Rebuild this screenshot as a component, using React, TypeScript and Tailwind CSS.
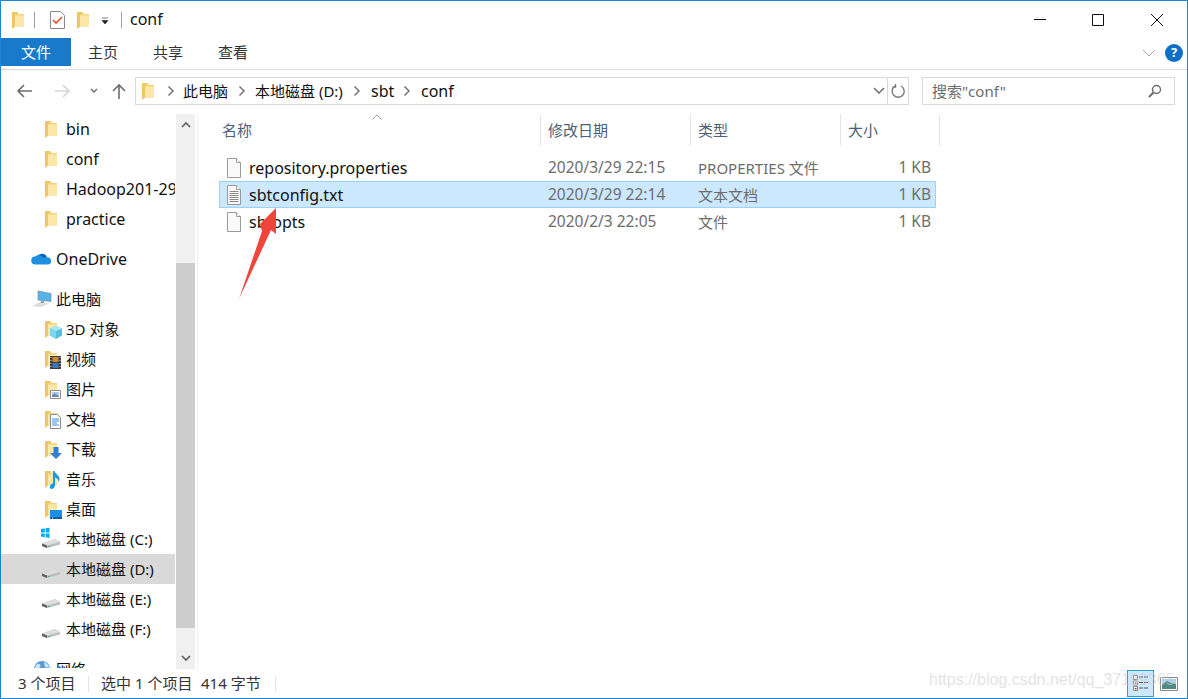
import type { ReactNode } from 'react'

const FONT = 'font-["Noto_Sans","Noto_Sans_CJK_SC",sans-serif]'

function Folder({ className = 'w-[14px] h-[18px]' }: { className?: string }) {
    return (
        <svg viewBox="0 0 14 18" className={className}>
            <path d="M1 1h5l1.5 2H13v12.5L2.5 15.5 2 17.5 1 17z" fill="#f5d67f" />
            <path d="M4 4.5h9v11H4z" fill="#fbe7a6" />
            <path d="M1 1h5l1.5 2H4v12.5l-2 2-1-.5z" fill="#eec765" />
        </svg>
    )
}

function FileIcon({ lines = false }: { lines?: boolean }) {
    return (
        <svg viewBox="0 0 16 20" className="w-4 h-5 shrink-0">
            <path d="M1.5.5h9l4 4v15h-13z" fill="#fafafa" stroke="#9a9a9a" />
            <path d="M10.5.5v4h4" fill="#fff" stroke="#9a9a9a" />
            {lines && (
                <path d="M3.5 6.5h9M3.5 8.5h9M3.5 10.5h9M3.5 12.5h9M3.5 14.5h9M3.5 16.5h9" stroke="#8a8a8a" />
            )}
        </svg>
    )
}

function Drive({ win = false }: { win?: boolean }) {
    return (
        <svg viewBox="0 0 20 16" className="w-5 h-4 overflow-visible">
            {win && <path d="M0-3l3.800-.6V.6H0zM4.600-3.700 8.500-4.300V.6H4.600zM0 1.400h3.800v3.800L0 4.600zM4.600 1.400h3.900v4.500L4.600 5.300z" fill="#00adef" />}
            <path d="M1 11.500 14 7l5 3v2.500L6 16l-5-2z" fill="#bdbdbd" />
            <path d="M1 11.500 6 13.500 19 10 14 7z" fill="#dedede" />
            <path d="M1 11.500l5 2V16l-5-2z" fill="#5e5e5e" />
            <path d="M7 14h2v1H7z" fill="#57b86a" />
        </svg>
    )
}

function Overlay({ kind }: { kind: string }) {
    if (kind === '3d') {
        return (
            <svg viewBox="0 0 12 13" className="w-3 h-[13px]">
                <path d="M6 0l6 2.500v7L6 13 0 9.500v-7z" fill="#4fc3dc" />
                <path d="M6 0l6 2.500L6 5 0 2.500z" fill="#a8e8f2" />
                <path d="M0 2.500 6 5v8L0 9.500z" fill="#7fd8ea" />
            </svg>
        )
    }
    if (kind === 'video') {
        return (
            <svg viewBox="0 0 11 13" className="w-[11px] h-[13px]">
                <path d="M0 0h11v13H0z" fill="#3c3c3c" />
                <path d="M2.500 1h6v5h-6z" fill="#c98b3a" />
                <path d="M2.500 7h6v5h-6z" fill="#3f76c4" />
                <path d="M.5 1h1v1h-1zM.5 4h1v1h-1zM.5 7h1v1h-1zM.5 10h1v1h-1zM9.500 1h1v1h-1zM9.500 4h1v1h-1zM9.500 7h1v1h-1zM9.500 10h1v1h-1z" fill="#ddd" />
            </svg>
        )
    }
    if (kind === 'pic') {
        return (
            <svg viewBox="0 0 11 9" className="w-[11px] h-[9px]">
                <path d="M.5.500h10v8H.500z" fill="#fff" stroke="#8c8c8c" />
                <path d="M2 2h7v3H2z" fill="#a9c8ea" />
                <path d="M2 7V5l3-1.500L9 6v1z" fill="#6b8aa8" />
            </svg>
        )
    }
    if (kind === 'doc') {
        return (
            <svg viewBox="0 0 11 15" className="w-[11px] h-[15px]">
                <path d="M.5.500h7l3 3v11H.500z" fill="#fff" stroke="#8c8c8c" />
                <path d="M2 5h7M2 7h7M2 9h5M2 11h7" stroke="#3a8fd8" />
            </svg>
        )
    }
    if (kind === 'down') {
        return (
            <svg viewBox="0 0 12 12" className="w-3 h-3">
                <path d="M3.500 0h5v6H12l-6 6-6-6h3.500z" fill="#2f7fd0" />
            </svg>
        )
    }
    if (kind === 'music') {
        return (
            <svg viewBox="0 0 10 18" className="w-[10px] h-[18px]">
                <path d="M3 0h1.500c.5 3 5 4 5 8 0 1.500-.5 2.500-1 3 0-2.500-2-4-3.500-4.500V14c0 2.500-2 4-3.500 4S0 17 0 15.500 1.500 12.500 3 12.500z" fill="#0f9be8" />
            </svg>
        )
    }
    return (
        <svg viewBox="0 0 12 9" className="w-3 h-[9px]">
            <path d="M0 0h12v8H0z" fill="#1b8fe3" />
            <path d="M0 7h12v2H0z" fill="#0a5fa8" />
            <path d="M2 7.500h1v1H2z" fill="#fff" />
        </svg>
    )
}

function SideRow({ icon, label, pad = 'pl-[65px]', size = 'text-[15px]', selected = false }: { icon: ReactNode; label: string; pad?: string; size?: string; selected?: boolean }) {
    return (
        <div className={`relative h-[30px] flex items-center whitespace-nowrap overflow-hidden text-[#111] ${size} ${pad} ${selected ? 'bg-[#d9d9d9]' : ''}`}>
            {icon}
            <span>{label}</span>
        </div>
    )
}

function FolderSlot({ overlay }: { overlay?: string }) {
    return (
        <span className="absolute left-[43px] top-[6px] w-[20px] h-[20px]">
            <Folder />
            {overlay && (
                <span className="absolute left-[6px] bottom-[1px] flex items-end">
                    <Overlay kind={overlay} />
                </span>
            )}
        </span>
    )
}

function DriveSlot({ win }: { win?: boolean }) {
    return (
        <span className="absolute left-[40px] top-[8px]">
            <Drive win={win} />
        </span>
    )
}

const crumbs = [
    { label: '此电脑', cls: 'ml-[8px] w-[55px] text-[15px]' },
    { label: '本地磁盘 (D:)', cls: 'ml-[9px] w-[98px] text-[15px]' },
    { label: 'sbt', cls: 'ml-[10px] w-[32px] text-[16px]' },
    { label: 'conf', cls: 'ml-[10px] w-auto text-[16px]' },
]

const files = [
    { name: 'repository.properties', date: '2020/3/29 22:15', type: 'PROPERTIES 文件', lines: false },
    { name: 'sbtconfig.txt', date: '2020/3/29 22:14', type: '文本文档', lines: true, selected: true },
    { name: 'sbtopts', date: '2020/2/3 22:05', type: '文件', lines: false },
]

function Chevron() {
    return (
        <svg viewBox="0 0 8 12" className="w-2 h-3 shrink-0">
            <path d="M1.500 1.500 6 6l-4.500 4.500" fill="none" stroke="#6a6a6a" strokeWidth="1.400" />
        </svg>
    )
}

export default function App() {
    return (
        <div className={`relative w-[1188px] h-[699px] overflow-hidden bg-white border border-[#1a86d9] flex flex-col ${FONT}`}>
            {/* title bar */}
            <div className="h-[37px] shrink-0 flex items-center pl-[10px] text-[16px] text-[#111]">
                <Folder />
                <div className="w-px h-4 bg-[#a0a0a0] ml-[9px] mr-[15px]" />
                <svg viewBox="0 0 15 18" className="w-[15px] h-[18px]">
                    <path d="M.5.500h10l4 4v13H.500z" fill="#fff" stroke="#8a8a8a" />
                    <path d="M3 9l3 3 6-6" fill="none" stroke="#e2562b" strokeWidth="1.600" />
                </svg>
                <Folder className="w-[14px] h-[18px] ml-[11px]" />
                <svg viewBox="0 0 8 8" className="w-2 h-2 ml-[11px] mt-[3px]">
                    <path d="M1 1h6M1 3.500h6L4 7z" fill="#222" stroke="#222" strokeWidth=".6" />
                </svg>
                <div className="w-px h-4 bg-[#a0a0a0] ml-[12px] mr-[8px]" />
                <span className="-mt-px">conf</span>
                <div className="ml-auto flex items-center">
                    <svg viewBox="0 0 46 30" className="w-[46px] h-[30px] mr-[12px]"><path d="M17 14.500h12" stroke="#111" fill="none" /></svg>
                    <svg viewBox="0 0 46 30" className="w-[46px] h-[30px] mr-[13px]"><path d="M17.500 9.500h11v11h-11z" stroke="#111" fill="none" /></svg>
                    <svg viewBox="0 0 46 30" className="w-[46px] h-[30px] mr-[7px]"><path d="M17 9l12 12M29 9 17 21" stroke="#111" fill="none" /></svg>
                </div>
            </div>

            {/* ribbon tabs */}
            <div className="h-[32px] shrink-0 flex text-[15px] text-[#333] border-b border-[#dadbdc]">
                <div className="w-[70px] h-[28px] bg-[#1979ca] text-white flex items-center justify-center">文件</div>
                <div className="ml-[17px] w-[65px] h-[28px] flex items-center">主页</div>
                <div className="w-[65px] h-[28px] flex items-center">共享</div>
                <div className="h-[28px] flex items-center">查看</div>
                <div className="ml-auto flex items-center h-[28px] pr-[4px] pt-[1px]">
                    <svg viewBox="0 0 14 8" className="w-[14px] h-2 mr-[9px]"><path d="M1 1l6 6 6-6" fill="none" stroke="#a8a8a8" /></svg>
                    <div className="w-[18px] h-[18px] rounded-full bg-[#0f6fc6] text-white text-[13px] font-bold flex items-center justify-center">?</div>
                </div>
            </div>

            {/* address row */}
            <div className="h-[44px] pb-[2px] shrink-0 flex items-center text-[15px] text-[#111]">
                <svg viewBox="0 0 16 14" className="w-4 h-[14px] ml-[15px]"><path d="M8 1 2 7l6 6M2 7h14" fill="none" stroke="#6d6d6d" strokeWidth="1.600" /></svg>
                <svg viewBox="0 0 16 14" className="w-4 h-[14px] ml-[23px]"><path d="M8 1l6 6-6 6M14 7H0" fill="none" stroke="#d6d6d6" strokeWidth="1.600" /></svg>
                <svg viewBox="0 0 8 6" className="w-2 h-[6px] ml-[19px]"><path d="M1 1l3 3 3-3" fill="none" stroke="#6d6d6d" strokeWidth="1.300" /></svg>
                <svg viewBox="0 0 14 16" className="w-[14px] h-4 ml-[14px]"><path d="M1 8l6-6 6 6M7 2v14" fill="none" stroke="#6d6d6d" strokeWidth="1.600" /></svg>
                <div className="ml-[9px] w-[774px] h-[28px] border border-[#d9d9d9] flex items-center">
                    <div className="pl-[5px] mr-[12px] flex">
                        <Folder />
                    </div>
                    <div className="flex items-center">
                        {crumbs.map(c => (
                            <div key={c.label} className="flex items-center">
                                <Chevron />
                                <span className={`whitespace-nowrap ${c.cls}`}>{c.label}</span>
                            </div>
                        ))}
                    </div>
                    <svg viewBox="0 0 12 8" className="w-3 h-2 ml-auto mr-[2px]"><path d="M1 1l5 5 5-5" fill="none" stroke="#6d6d6d" strokeWidth="1.500" /></svg>
                    <div className="w-[21px] h-full border-l border-[#d9d9d9] flex items-center justify-center">
                        <svg viewBox="0 0 16 16" className="w-4 h-4"><path d="M5 3.200A6 6 0 1 0 11 3M5.500 1v3H2.500" fill="none" stroke="#7a7a7a" strokeWidth="1.400" /></svg>
                    </div>
                </div>
                <div className="ml-[13px] w-[253px] h-[28px] border border-[#d9d9d9] flex items-center pl-[9px] pr-[12px] text-[#6d6d6d]">
                    <span>搜索"conf"</span>
                    <svg viewBox="0 0 14 14" className="w-[14px] h-[14px] ml-auto"><path d="M5.500 8.500 1 13" stroke="#6d6d6d" strokeWidth="2" fill="none" /><circle cx="8.500" cy="5.500" r="4" fill="none" stroke="#6d6d6d" strokeWidth="1.500" /></svg>
                </div>
            </div>

            {/* body */}
            <div className="flex-1 min-h-0 flex">
                <div className="w-[174px] shrink-0 overflow-hidden h-[554px]">
                    <SideRow icon={<FolderSlot />} label="bin" size="text-[16px]" />
                    <SideRow icon={<FolderSlot />} label="conf" size="text-[16px]" />
                    <SideRow icon={<FolderSlot />} label="Hadoop201-29" size="text-[16px]" />
                    <SideRow icon={<FolderSlot />} label="practice" size="text-[16px]" />
                    <div className="h-[10px]" />
                    <SideRow
                        pad="pl-[55px]"
                        size="text-[16px]"
                        label="OneDrive"
                        icon={
                            <span className="absolute left-[30px] top-[7px]">
                                <svg viewBox="0 0 20 14" className="w-5 h-[14px]">
                                    <path d="M6 6a5.500 5.500 0 0 1 10 0l-6 4z" fill="#0b5fb5" />
                                    <path d="M4.500 13.500a4 4 0 0 1-.5-8 5 5 0 0 1 8 1l4-.2a3.500 3.500 0 0 1 1 7.200z" fill="#1e90e0" />
                                </svg>
                            </span>
                        }
                    />
                    <div className="h-[10px]" />
                    <SideRow
                        pad="pl-[55px]"
                        label="此电脑"
                        icon={
                            <span className="absolute left-[31px] top-[6px]">
                                <svg viewBox="0 0 20 18" className="w-5 h-[18px]">
                                    <path d="M6 1l13 2.500v8L6 10z" fill="#58b4e8" stroke="#6f8ea3" strokeWidth=".7" />
                                    <path d="M0 16l8-4 9 1.500-8 3.500z" fill="#dcdcdc" />
                                    <path d="M9 11h3v2H9z" fill="#8ca0ae" />
                                </svg>
                            </span>
                        }
                    />
                    <SideRow icon={<FolderSlot overlay="3d" />} label="3D 对象" />
                    <SideRow icon={<FolderSlot overlay="video" />} label="视频" />
                    <SideRow icon={<FolderSlot overlay="pic" />} label="图片" />
                    <SideRow icon={<FolderSlot overlay="doc" />} label="文档" />
                    <SideRow icon={<FolderSlot overlay="down" />} label="下载" />
                    <SideRow icon={<FolderSlot overlay="music" />} label="音乐" />
                    <SideRow icon={<FolderSlot overlay="desk" />} label="桌面" />
                    <SideRow icon={<DriveSlot win />} label="本地磁盘 (C:)" />
                    <SideRow icon={<DriveSlot />} label="本地磁盘 (D:)" selected />
                    <SideRow icon={<DriveSlot />} label="本地磁盘 (E:)" />
                    <SideRow icon={<DriveSlot />} label="本地磁盘 (F:)" />
                    <div className="h-[10px]" />
                    <SideRow
                        pad="pl-[55px]"
                        label="网络"
                        icon={
                            <span className="absolute left-[32px] top-[6px]">
                                <svg viewBox="0 0 18 18" className="w-[18px] h-[18px]">
                                    <circle cx="9" cy="9" r="8" fill="#5b9bd5" />
                                    <path d="M4 4c3-1 4 1 3 3S3 9 2 7zM11 2c3 1 5 3 5 6l-4-1z" fill="#cfe4f5" />
                                </svg>
                            </span>
                        }
                    />
                </div>

                {/* nav scrollbar */}
                <div className="w-[19px] ml-px h-[555px] shrink-0 bg-[#f0f0f0] flex flex-col">
                    <div className="h-[149px] flex justify-center pt-[8px]">
                        <svg viewBox="0 0 10 6" className="w-[10px] h-[6px]"><path d="M1 5l4-4 4 4" fill="none" stroke="#606060" strokeWidth="1.700" /></svg>
                    </div>
                    <div className="h-[365px] bg-[#cdcdcd]" />
                    <div className="flex-1 flex justify-center items-end pb-[8px]">
                        <svg viewBox="0 0 10 6" className="w-[10px] h-[6px]"><path d="M1 1l4 4 4-4" fill="none" stroke="#606060" strokeWidth="1.700" /></svg>
                    </div>
                </div>
                <div className="w-px ml-[2px] h-[555px] bg-[#f0f0f0] shrink-0" />

                {/* file list */}
                <div className="flex-1 min-w-0 pl-[21px]">
                    <div className="relative flex h-[32px] text-[15px] text-[#4c607a]">
                        <div className="w-[321px] pl-[3px] flex items-center">名称</div>
                        <svg viewBox="0 0 10 6" className="absolute left-[153px] top-0 w-[10px] h-[6px]"><path d="M.5 5.500 5 1l4.500 4.500" fill="none" stroke="#a0a0a0" /></svg>
                        <div className="w-[150px] pl-[7px] border-l border-[#e5e5e5] flex items-center">修改日期</div>
                        <div className="w-[150px] pl-[7px] border-l border-[#e5e5e5] flex items-center">类型</div>
                        <div className="w-[100px] pl-[7px] border-x border-[#e5e5e5] flex items-center">大小</div>
                    </div>
                    <div className="pt-[8px] w-[717px]">
                        {files.map(f => (
                            <div
                                key={f.name}
                                className={`flex items-center h-[27px] border text-[15px] text-[#6d6d6d] ${f.selected ? 'bg-[#cce8ff] border-[#99d1ff]' : 'border-transparent'}`}
                            >
                                <div className="w-[320px] pl-[6px] flex items-center gap-[7px] text-[16px] text-[#111]">
                                    <FileIcon lines={f.lines} />
                                    <span>{f.name}</span>
                                </div>
                                <div className="w-[150px] pl-[8px] mt-px text-[15.5px]">{f.date}</div>
                                <div className="w-[150px] pl-[8px] mt-px">{f.type}</div>
                                <div className="flex-1 text-right pr-[4px] mt-px text-[15.5px]">1 KB</div>
                            </div>
                        ))}
                    </div>
                </div>
            </div>

            {/* status bar */}
            <div className="h-[27px] shrink-0 flex items-center pl-[17px] pb-[2px] text-[15px] text-[#333]">
                <span className="w-[70px]">3 个项目</span>
                <div className="w-px h-4 bg-[#e5e5e5] mr-[12px]" />
                <span className="w-[100px]">选中 1 个项目</span>
                <span className="w-[74px]">414 字节</span>
                <div className="w-px h-4 bg-[#e5e5e5]" />
                <div className="ml-auto h-full flex items-center pr-[9px]">
                    <div className="w-[27px] h-[27px] -mt-px bg-[#cce8ff] border border-[#26a0da] flex items-center justify-center">
                        <svg viewBox="0 0 18 18" className="w-[18px] h-[18px]">
                            <path d="M1.500 1.500h4v4h-4zM1.500 7h4v4h-4zM1.500 12.500h4v4h-4z" fill="#fff" stroke="#8a8a8a" />
                            <path d="M3 8.500h1.500V10H3zM3 14h1.500v1.500H3z" fill="#c62c1c" />
                            <path d="M7 3h10M7 8.500h10M7 14h10" stroke="#555" strokeDasharray="4 1" />
                        </svg>
                    </div>
                    <div className="w-[24px] flex justify-end">
                        <svg viewBox="0 0 18 14" className="w-[18px] h-[14px]">
                            <path d="M.5.500h17v13H.500z" fill="#fff" stroke="#8a8a8a" />
                            <path d="M2 2h14v5H2z" fill="#a9d0f0" />
                            <path d="M2 7l5-3 4 2 5 1v5H2z" fill="#4f8a86" />
                        </svg>
                    </div>
                </div>
            </div>

            {/* pasted annotation */}
            <svg viewBox="0 0 50 100" className="absolute left-[237px] top-[206px] w-[50px] h-[100px]">
                <path d="M1 92 24 24 22 17 38 1 38 27 33 23z" fill="#f0453a" />
            </svg>
            <div className='absolute left-[928px] top-[667px] font-["Liberation_Sans",sans-serif] text-[16px] text-[#d0d0d0]/60 whitespace-nowrap pointer-events-none'>
                https://blog.csdn.net/qq_37169365
            </div>
        </div>
    )
}
